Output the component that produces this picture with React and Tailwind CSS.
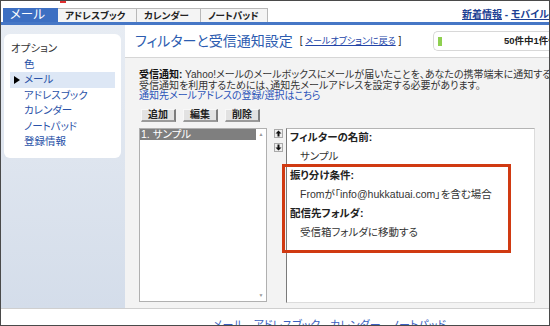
import React from 'react';

const tabs = ['アドレスブック', 'カレンダー', 'ノートパッド'];
const tabWidths = ['w-[79px]', 'w-[64px]', 'w-[67px]'];

const sideItems = ['色', 'メール', 'アドレスブック', 'カレンダー', 'ノートパッド', '登録情報'];

function ArrowButton({ up }) {
  return (
    <div className="flex h-[9px] w-[9px] items-center justify-center border border-[#aaa] bg-[#eee]">
      <svg width="7" height="7" viewBox="0 0 7 7" className={up ? '' : 'rotate-180'}>
        <path d="M3.5 0.5 L6.5 3.5 L4.5 3.5 L4.5 6.5 L2.5 6.5 L2.5 3.5 L0.5 3.5 Z" fill="#111" />
      </svg>
    </div>
  );
}

function ToolButton({ label }) {
  return (
    <button
      type="button"
      className="flex h-[13px] w-[35px] items-center justify-center border-t border-l border-t-[#f8f8f8] border-l-[#f8f8f8] border-r-2 border-b-2 border-r-[#7d7d7d] border-b-[#9a9a9a] bg-[#e2e2e2] text-[10px] font-bold leading-none text-[#222]"
    >
      {label}
    </button>
  );
}

export default function App() {
  return (
    <div className="flex h-[326px] w-[550px] flex-col overflow-hidden border border-[#4a4a4a] bg-white font-['Liberation_Sans','Noto_Sans_CJK_JP',sans-serif] text-[#333] [font-feature-settings:'palt']">
      {/* logo remnant */}
      <div className="h-[7px] pl-[59px]">
        <div className="h-[2px] w-[6px] bg-[#e03030]" />
      </div>

      {/* tabs */}
      <div className="flex h-[14px] items-end">
        <div className="ml-[2px] flex h-[14px] w-[55px] items-center bg-[#3d6fc2] pl-[7px] text-[12.5px] leading-none text-white">
          メール
        </div>
        {tabs.map((t, i) => (
          <div
            key={t}
            className={`flex h-[14px] items-center border-t border-r border-[#b8b8b8] bg-[#f4f4f4] pl-[7px] text-[9.5px] font-bold leading-none text-[#222] ${tabWidths[i]}`}
          >
            {t}
          </div>
        ))}
        <div className="ml-auto self-center whitespace-nowrap text-[10px] font-bold leading-none text-[#1d3f94]">
          <span className="underline">新着情報</span> - <span className="underline">モバイル</span>
        </div>
      </div>
      <div className="h-[3px] bg-[#4677c6]" />

      {/* main */}
      <div className="flex h-[283px]">
        <aside className="w-[124px] shrink-0 bg-gradient-to-b from-[#e7ecf3] to-[#d4ddea] pt-[9px] pl-[3px] pr-[4px]">
          <div className="h-[124px] w-[117px] rounded-[6px] bg-white pt-[7px] text-[10.5px] leading-[15.5px]">
            <div className="pl-[7px] text-[#333]">オプション</div>
            {sideItems.map((item) => {
              const active = item === 'メール';
              return (
                <div
                  key={item}
                  className={`relative mx-[6px] pl-[14px] text-[#2a52a8] ${active ? 'bg-[#dde7f5]' : ''}`}
                >
                  {active && (
                    <span className="absolute left-[4px] top-[4px] h-0 w-0 border-y-[4px] border-l-[6px] border-y-transparent border-l-black" />
                  )}
                  {item}
                </div>
              );
            })}
          </div>
        </aside>

        <div className="flex min-w-0 flex-1 flex-col">
          {/* header */}
          <div className="flex h-[33px] items-center border-b border-[#d6d6d6] bg-white">
            <h1 className="ml-[10px] whitespace-nowrap text-[14px] font-normal leading-none text-[#2c5cb0]">
              フィルターと受信通知設定
            </h1>
            <span className="ml-[7px] whitespace-nowrap text-[10px] leading-none text-[#222]">
              [ <span className="text-[9px] text-[#2345a8] underline">メールオプションに戻る</span> ]
            </span>
            <div className="ml-auto flex h-[20px] w-[116px] shrink-0 items-center overflow-hidden rounded-l-[5px] border border-r-0 border-[#d8d8d8] bg-white pl-[4px]">
              <div className="h-[9px] w-[4px] shrink-0 bg-[#8fd050]" />
              <span className="ml-[62px] whitespace-nowrap text-[9.5px] font-bold leading-none text-[#222]">
                50件中1件使用
              </span>
            </div>
          </div>

          {/* body */}
          <div className="flex-1 overflow-hidden bg-[#f3f3f3] pl-[14px] pt-[12px]">
            <div className="whitespace-nowrap text-[10px] leading-[10.5px] text-[#333]">
              <p>
                <b className="text-[#111]">受信通知:</b> Yahoo!メールのメールボックスにメールが届いたことを、あなたの携帯端末に通知する機能
              </p>
              <p>受信通知を利用するためには、通知先メールアドレスを設定する必要があります。</p>
              <p className="text-[#2a52b8]">通知先メールアドレスの登録/選択はこちら</p>
            </div>

            <div className="mt-[7px] flex gap-[7px] pl-[2px]">
              <ToolButton label="追加" />
              <ToolButton label="編集" />
              <ToolButton label="削除" />
            </div>

            <div className="mt-[6px] flex items-start">
              {/* filter list */}
              <div className="flex h-[174px] w-[128px] border border-[#b0b0b0] bg-white">
                <div className="flex-1">
                  <div className="h-[11px] bg-[#7f7f7f] pl-[1px] text-[10.5px] leading-[11px] text-white">
                    1. サンプル
                  </div>
                </div>
                <div className="flex w-[10px] flex-col items-center justify-between py-[3px] text-[5px] leading-none text-[#999]">
                  <span>▲</span>
                  <span>▼</span>
                </div>
              </div>

              <div className="ml-[7px] mt-[1px] flex flex-col gap-[5px]">
                <ArrowButton up />
                <ArrowButton />
              </div>

              {/* filter detail */}
              <div className="relative ml-[3px] h-[175px] w-[249px] border border-[#dcdcdc] border-l-[#7a7a7a] border-t-[#b4b4b4] bg-white pl-[3px] pt-[1px]">
                <div className="flex flex-col gap-[5px] whitespace-nowrap text-[10.5px] leading-[14px]">
                  <div className="font-bold text-[#222]">フィルターの名前:</div>
                  <div className="pl-[10px] text-[#333]">サンプル</div>
                  <div className="font-bold text-[#222]">振り分け条件:</div>
                  <div className="pl-[10px] text-[#333]">Fromが「info@hukkatuai.com」を含む場合</div>
                  <div className="font-bold text-[#222]">配信先フォルダ:</div>
                  <div className="pl-[10px] text-[#333]">受信箱フォルダに移動する</div>
                </div>
                <div className="absolute left-[-5px] top-[35px] h-[89px] w-[229px] border-[3px] border-[#d03a12]" />
              </div>
            </div>
          </div>
        </div>
      </div>

      {/* footer */}
      <div className="flex-1 overflow-hidden whitespace-nowrap border-t border-[#cfcfcf] bg-white pl-[212px] pt-[11px] text-[11px] leading-none text-[#3b5fc0]">
        <span className="underline">メール</span> - <span className="underline">アドレスブック</span> -{' '}
        <span className="underline">カレンダー</span> - <span className="underline">ノートパッド</span>
      </div>
    </div>
  );
}
